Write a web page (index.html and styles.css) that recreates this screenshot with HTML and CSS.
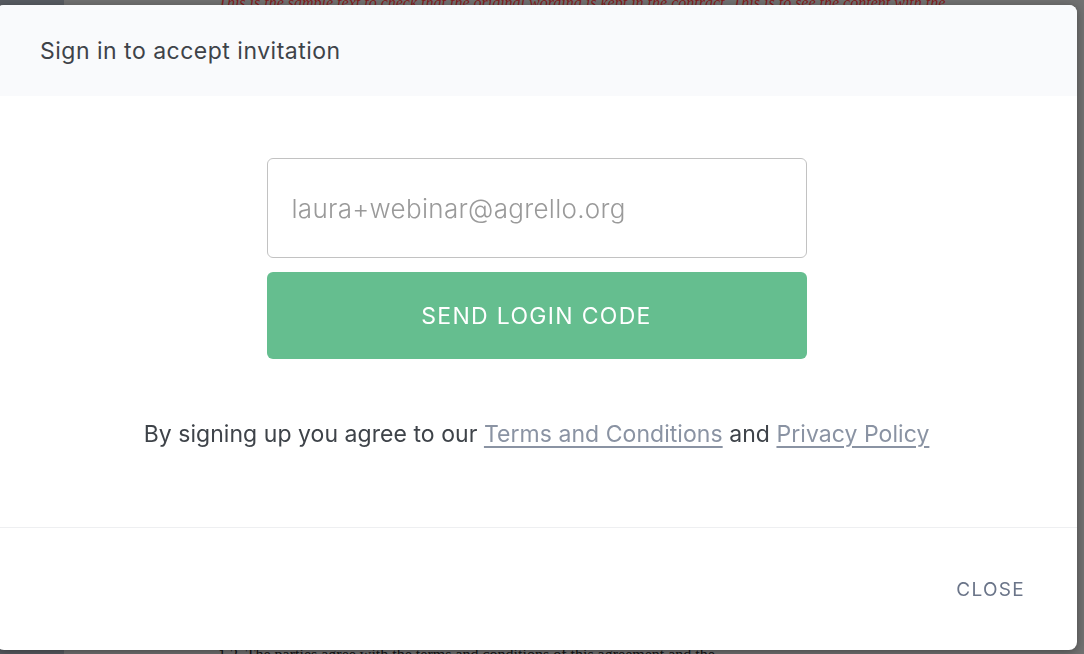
FILE: index.html
```html
<!DOCTYPE html>
<html lang="en">
<head>
    <meta charset="UTF-8">
    <meta name="viewport" content="width=device-width, initial-scale=1.0">
    <title>Accept invitation</title>
    <link rel="stylesheet" href="styles.css">
</head>
<body>
    <div class="page">
        <div class="sidebar"></div>
        <div class="document">
            <p class="doc-note">This is the sample text to check that the original wording is kept in the contract. This is to see the content with the</p>
            <p class="doc-line">1.2. The parties agree with the terms and conditions of this agreement and the</p>
        </div>
    </div>

    <div class="overlay">
        <div class="modal">
            <div class="modal-header">
                <h2>Sign in to accept invitation</h2>
            </div>

            <form class="modal-body" id="inviteForm">
                <input type="email" class="email-input" name="email" placeholder="laura+webinar@agrello.org">
                <button type="submit" class="send-btn">Send login code</button>
                <p class="terms">By signing up you agree to our <a href="#">Terms and Conditions</a> and <a href="#">Privacy Policy</a></p>
            </form>

            <div class="modal-footer">
                <button type="button" class="close-btn">Close</button>
            </div>
        </div>
    </div>
</body>
</html>
```

FILE: styles.css
```css
* {
    margin: 0;
    padding: 0;
    box-sizing: border-box;
}
body {
    width: 1084px;
    height: 654px;
    overflow: hidden;
    font-family: 'Inter', 'Open Sans', sans-serif;
    background: #7b7b7b;
}
.page {
    display: flex;
    height: 100%;
}
.sidebar {
    width: 64px;
    background: #5f636a;
}
.document {
    flex: 1;
    display: flex;
    flex-direction: column;
    justify-content: space-between;
    padding: 0 0 0 154px;
    font-family: 'Liberation Serif', serif;
    font-size: 16px;
}
.doc-note {
    color: #8f1c1c;
    font-style: italic;
    margin-top: -6px;
    white-space: nowrap;
}
.doc-line {
    color: #111;
    margin-bottom: -10px;
    white-space: nowrap;
}
.overlay {
    position: fixed;
    inset: 0;
    background: rgba(40, 40, 40, 0.12);
}
.modal {
    position: absolute;
    top: 5px;
    left: -4px;
    width: 1081px;
    height: 645px;
    background: #fff;
    border-radius: 8px;
    box-shadow: 0 2px 8px rgba(0, 0, 0, 0.35);
    display: flex;
    flex-direction: column;
    overflow: hidden;
}
.modal-header {
    height: 91px;
    background: #f9fafc;
    display: flex;
    align-items: center;
    padding-left: 44px;
}
.modal-header h2 {
    font-size: 23px;
    font-weight: 400;
    color: #3e4349;
    letter-spacing: 0.5px;
}
.modal-body {
    height: 432px;
    display: flex;
    flex-direction: column;
    align-items: center;
    padding-top: 62px;
    border-bottom: 1px solid #eeeff1;
}
.email-input {
    width: 540px;
    height: 100px;
    border: 1px solid #c2c2c2;
    border-radius: 6px;
    padding: 0 24px;
    font-family: inherit;
    font-size: 26px;
    color: #333;
    outline: none;
}
.email-input::placeholder {
    color: #9a9a9a;
    font-weight: 300;
    letter-spacing: 0.3px;
}
.send-btn {
    width: 540px;
    height: 87px;
    margin-top: 14px;
    background: #65be8f;
    color: #fff;
    border: none;
    border-radius: 6px;
    font-family: inherit;
    font-size: 23px;
    letter-spacing: 1.3px;
    text-transform: uppercase;
    cursor: pointer;
}
.terms {
    margin-top: 61px;
    font-size: 23px;
    color: #3e4349;
    letter-spacing: 0.05px;
}
.terms a {
    color: #8a93a3;
    text-decoration: underline;
    text-underline-offset: 4px;
}
.modal-footer {
    flex: 1;
    display: flex;
    align-items: center;
    justify-content: flex-end;
    padding-right: 52px;
}
.close-btn {
    background: none;
    border: none;
    font-family: inherit;
    font-size: 19px;
    letter-spacing: 1.3px;
    text-transform: uppercase;
    color: #6b7589;
    cursor: pointer;
}
```
